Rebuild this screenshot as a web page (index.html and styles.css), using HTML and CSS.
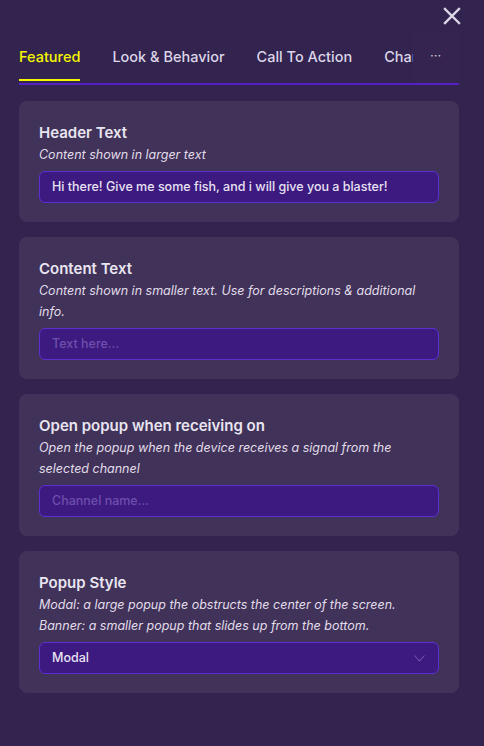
FILE: index.html
```html
<!DOCTYPE html>
<html>
<head>
<meta charset="utf-8">
<link rel="stylesheet" href="styles.css">
</head>
<body>
<div class="panel">
  <div class="topbar">
    <button class="close" aria-label="Close">
      <svg width="18" height="18" viewBox="0 0 18 18"><path d="M2 2 L16 16 M16 2 L2 16" stroke="#dcd8e6" stroke-width="2.4" stroke-linecap="square"/></svg>
    </button>
  </div>
  <div class="tabs">
    <div class="tablist">
      <div class="tab active">Featured</div>
      <div class="tab">Look &amp; Behavior</div>
      <div class="tab">Call To Action</div>
      <div class="tab">Channels</div>
    </div>
    <div class="more">···</div>
  </div>
  <div class="cards">
    <div class="card">
      <div class="title">Header Text</div>
      <div class="desc">Content shown in larger text</div>
      <div class="field">Hi there! Give me some fish, and i will give you a blaster!</div>
    </div>
    <div class="card">
      <div class="title">Content Text</div>
      <div class="desc">Content shown in smaller text. Use for descriptions &amp; additional info.</div>
      <div class="field placeholder">Text here...</div>
    </div>
    <div class="card">
      <div class="title">Open popup when receiving on</div>
      <div class="desc">Open the popup when the device receives a signal from the selected channel</div>
      <div class="field placeholder">Channel name...</div>
    </div>
    <div class="card">
      <div class="title">Popup Style</div>
      <div class="desc">Modal: a large popup the obstructs the center of the screen. Banner: a smaller popup that slides up from the bottom.</div>
      <div class="field select"><span>Modal</span>
        <svg width="11" height="7" viewBox="0 0 11 7"><path d="M0.5 0.5 L5.5 6 L10.5 0.5" fill="none" stroke="#6f55b0" stroke-width="1.1"/></svg>
      </div>
    </div>
  </div>
</div>
</body>
</html>
```
FILE: styles.css
```css
html, body {
  margin: 0;
  padding: 0;
  background: #33234f;
  font-family: Inter, "Noto Sans", sans-serif;
}
.panel {
  width: 484px;
  height: 746px;
  box-sizing: border-box;
  padding: 0 25px 0 19px;
  overflow: hidden;
}
.topbar {
  display: flex;
  justify-content: flex-end;
  height: 32px;
  margin-right: -2px;
}
.close {
  background: none;
  border: none;
  padding: 7px 0 0 0;
  width: 19px;
  height: 28px;
  cursor: pointer;
}
.tabs {
  display: flex;
  align-items: stretch;
  height: 51px;
  border-bottom: 2px solid #5420c4;
  margin-bottom: 16px;
}
.tablist {
  display: flex;
  flex: 1;
  overflow: hidden;
  gap: 32px;
  white-space: nowrap;
}
.tab {
  font-size: 14.5px;
  font-weight: 500;
  color: #dcd6e8;
  line-height: 49px;
  height: 49px;
  margin-bottom: -2px;
  border-bottom: 2px solid transparent;
  box-sizing: border-box;
}
.tab.active {
  color: #f6f600;
  border-bottom-color: #f6f600;
}
.more {
  width: 46px;
  flex: none;
  color: #cfc8de;
  font-size: 13px;
  line-height: 46px;
  padding-left: 17px;
  box-sizing: border-box;
  background: #34244f;
}
.cards {
  display: flex;
  flex-direction: column;
  gap: 15px;
}
.card {
  background: #403259;
  border-radius: 8px;
  padding: 20px 20px 19px 20px;
  display: flex;
  flex-direction: column;
}
.title {
  font-size: 15px;
  font-weight: 600;
  line-height: 22px;
  color: #e9e5f0;
  padding-top: 1px;
  margin-bottom: -1px;
}
.desc {
  margin-top: 1px;
  font-size: 12.5px;
  font-style: italic;
  line-height: 21px;
  color: #e2dde9;
}
.field {
  margin-top: 6px;
  height: 32px;
  box-sizing: border-box;
  background: #3d1a80;
  border: 1px solid #5b2fd0;
  border-radius: 6px;
  padding: 0 12px;
  font-size: 12.5px;
  font-weight: 500;
  line-height: 30px;
  color: #e8e2f2;
  white-space: nowrap;
  overflow: hidden;
}
.placeholder {
  color: #6d4fac;
}
.select {
  display: flex;
  justify-content: space-between;
  align-items: center;
  padding-right: 13px;
}
```
